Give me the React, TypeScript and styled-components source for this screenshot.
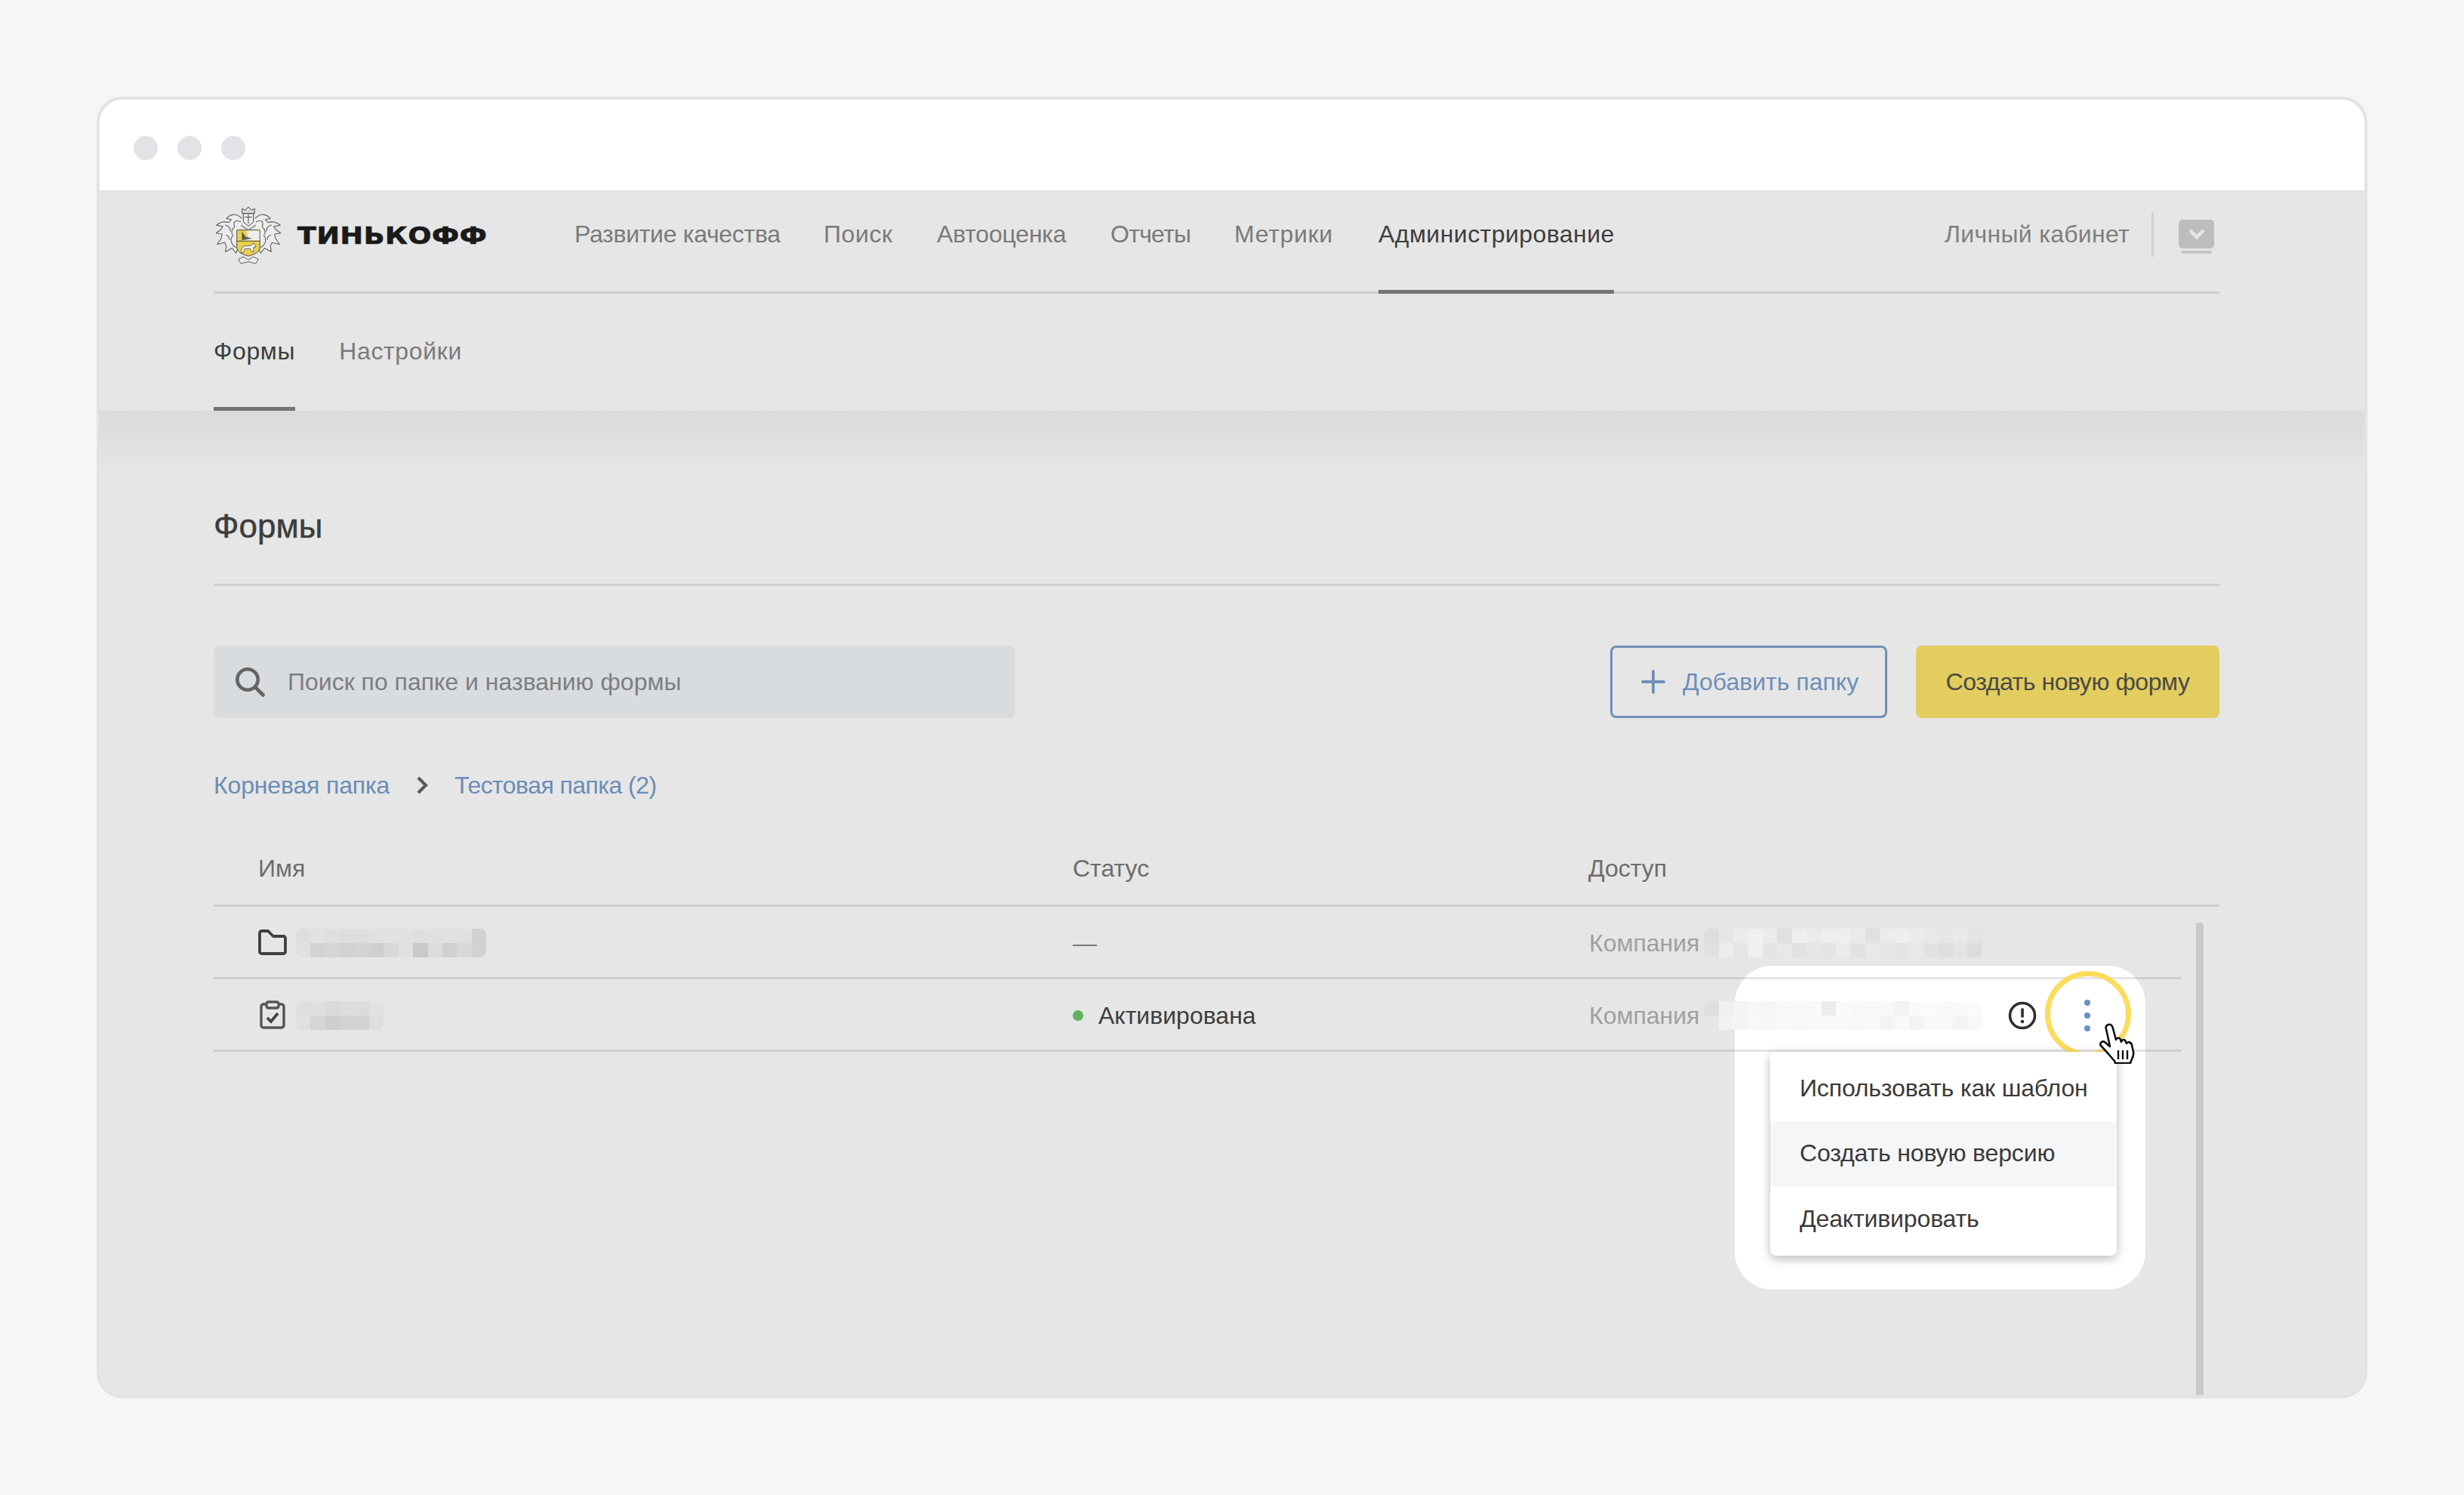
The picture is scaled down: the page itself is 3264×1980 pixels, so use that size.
import styled, { createGlobalStyle } from "styled-components";
import { Plus } from "lucide-react";

const GlobalStyle = createGlobalStyle`
  html, body {
    margin: 0;
    padding: 0;
    background: #f5f6f8;
    font-family: "Liberation Sans", Arial, sans-serif;
  }
  * {
    box-sizing: border-box;
  }
`;

const Page = styled.div`
  width: 3264px;
  height: 1980px;
  overflow: hidden;
  padding: 128px 0 0 128px;
  background: #f5f6f8;
`;

const Window = styled.div`
  width: 3008px;
  height: 1724px;
  display: flex;
  flex-direction: column;
  position: relative;
  overflow: hidden;
  border: 4px solid #e1e3e7;
  border-radius: 34px;
  background: #e6e6e6;
`;

const TitleBar = styled.div`
  height: 124px;
  flex: none;
  padding: 8px 0 0 45px;
  display: flex;
  align-items: center;
  gap: 26px;
  background: #fff;
  border-bottom: 4px solid #e1e3e7;
`;

const Dot = styled.span`
  width: 32px;
  height: 32px;
  border-radius: 50%;
  background: #e1e3e7;
`;

const Header = styled.header`
  height: 288px;
  flex: none;
  padding: 0 192px 0 151px;
`;

const TopNav = styled.nav`
  height: 133px;
  display: flex;
  align-items: stretch;
  border-bottom: 3px solid #cfcfcf;
`;

const Brand = styled.div`
  width: 478px;
  flex: none;
  padding: 17px 0 0 3px;
  display: flex;
  align-items: flex-start;
  gap: 22px;
`;

const BrandName = styled.span`
  margin-top: 20px;
  font-family: "DejaVu Sans", sans-serif;
  font-size: 32px;
  font-weight: 700;
  line-height: 38px;
  letter-spacing: 0.5px;
  color: #1a1a1a;
  -webkit-text-stroke: 0.7px #1a1a1a;
  transform: scaleX(1.14);
  transform-origin: left center;
`;

const NavList = styled.div`
  display: flex;
  gap: 58px;
`;

const NavLink = styled.a<{ $active?: boolean; $width: number; $spacing: number }>`
  width: ${(p) => p.$width}px;
  padding-top: 35px;
  font-size: 32px;
  line-height: 38px;
  letter-spacing: ${(p) => p.$spacing}px;
  white-space: nowrap;
  color: ${(p) => (p.$active ? "#3d3d3d" : "#7a7a7a")};
  border-bottom: 5px solid ${(p) => (p.$active ? "#737373" : "transparent")};
  margin-bottom: -3px;
`;

const Account = styled.div`
  margin-left: auto;
  padding: 35px 7px 0 0;
  display: flex;
  align-items: flex-start;
`;

const AccountLink = styled.span`
  font-size: 32px;
  line-height: 38px;
  letter-spacing: 0.3px;
  color: #7e7e7e;
`;

const AccountDivider = styled.span`
  width: 3px;
  height: 58px;
  margin: -9px 33px 0 29px;
  background: #cfcfcf;
`;

const AccountToggle = styled.span`
  width: 47px;
  height: 38px;
  display: flex;
  align-items: center;
  justify-content: center;
  position: relative;
  border-radius: 5px;
  background: #bcbdbf;

  &::after {
    content: "";
    position: absolute;
    left: 3px;
    right: 3px;
    bottom: -7px;
    height: 4px;
    border-radius: 0 0 3px 3px;
    background: #c4c5c7;
  }
`;

const SubNav = styled.div`
  height: 155px;
  display: flex;
  gap: 58px;
`;

const SubLink = styled.a<{ $active?: boolean }>`
  height: 155px;
  padding-top: 56px;
  font-size: 32px;
  line-height: 40px;
  letter-spacing: 0.65px;
  color: ${(p) => (p.$active ? "#3d3d3d" : "#7a7a7a")};
  border-bottom: 5px solid ${(p) => (p.$active ? "#737373" : "transparent")};
`;

const Content = styled.main`
  flex: 1;
  min-height: 0;
  padding: 0 192px 0 151px;
  display: flex;
  flex-direction: column;
  background: linear-gradient(#dadada 0, #e6e6e6 80px);
`;

const PageTitle = styled.h1`
  height: 232px;
  flex: none;
  margin: 0;
  padding-top: 128px;
  font-size: 44px;
  line-height: 50px;
  font-weight: 400;
  -webkit-text-stroke: 0.5px #3d3d3d;
  color: #3d3d3d;
  border-bottom: 3px solid #cfcfcf;
`;

const Toolbar = styled.div`
  height: 96px;
  flex: none;
  margin-top: 79px;
  display: flex;
  gap: 38px;
`;

const SearchBox = styled.div`
  width: 1062px;
  margin-right: auto;
  padding-left: 29px;
  display: flex;
  align-items: center;
  gap: 30px;
  border-radius: 8px;
  background: #d9dcdf;
  font-size: 32px;
  color: #7c7e82;
`;

const AddButton = styled.button`
  width: 367px;
  display: flex;
  align-items: center;
  gap: 15px;
  padding: 0 0 0 30px;
  border: 3px solid #6f8fb8;
  border-radius: 8px;
  background: transparent;
  font: inherit;
  font-size: 32px;
  color: #6f8fb8;
`;

const CreateButton = styled.button`
  width: 402px;
  padding: 0;
  border: none;
  border-radius: 8px;
  background: #e2cd5e;
  font: inherit;
  font-size: 32px;
  letter-spacing: -0.45px;
  color: #4a4a45;
`;

const Breadcrumbs = styled.div`
  height: 44px;
  flex: none;
  margin-top: 67px;
  display: flex;
  align-items: center;
  gap: 35px;
  font-size: 32px;
  color: #6a8db5;
`;

const Crumb = styled.span<{ $spacing: number }>`
  letter-spacing: ${(p) => p.$spacing}px;
`;

const TableHead = styled.div`
  height: 139px;
  flex: none;
  padding: 69px 0 0;
  display: grid;
  grid-template-columns: 1138px 683px 1fr;
  font-size: 32px;
  line-height: 38px;
  color: #6d6d6d;
  border-bottom: 3px solid #cfcfcf;
`;

const HeadCell = styled.div<{ $first?: boolean }>`
  padding-left: ${(p) => (p.$first ? "59px" : "0")};
`;

const TableBody = styled.div`
  flex: 1;
  min-height: 0;
  display: flex;
`;

const Rows = styled.div`
  width: 2607px;
  flex: none;
`;

const Scrollbar = styled.div`
  width: 10px;
  margin: 21px 0 0 19px;
  background: #c8c9cb;
  border-radius: 4px 4px 0 0;
`;

const Row = styled.div`
  height: 96px;
  padding-top: 3px;
  position: relative;
  z-index: 1;
  display: grid;
  grid-template-columns: 1138px 683px 1fr;
  align-items: center;
  font-size: 32px;
  border-bottom: 3px solid rgba(0, 0, 0, 0.1);
`;

const NameCell = styled.div`
  padding-left: 59px;
  display: flex;
  align-items: center;
  gap: 12px;
`;

const RowIcon = styled.svg`
  width: 38px;
  height: 38px;
  flex: none;
  margin-top: -3px;
`;

const StatusCell = styled.div`
  display: flex;
  align-items: center;
  color: #3d3d3d;
`;

const StatusDash = styled.span`
  color: #7a7a7a;
`;

const StatusDot = styled.span`
  width: 14px;
  height: 14px;
  margin-right: 20px;
  border-radius: 50%;
  background: #5fb25f;
`;

const AccessCell = styled.div`
  padding-left: 1px;
  display: flex;
  align-items: center;
  color: #a0a0a0;
`;

const AccessLabel = styled.span`
  margin-right: 6px;
`;

const Mosaic = styled.div<{ $cols: number }>`
  display: grid;
  grid-template-columns: repeat(${(p) => p.$cols}, 19.4px);
  grid-auto-rows: 19.4px;
  overflow: hidden;
  border-radius: 8px;
`;

const Cell = styled.span<{ $shade: string }>`
  background: #${(p) => p.$shade};
`;

const AlertIcon = styled.svg`
  width: 38px;
  height: 38px;
  margin-left: 34px;
`;

const MenuToggle = styled.div`
  width: 8px;
  height: 42px;
  margin-left: 63px;
  display: flex;
  flex-direction: column;
  justify-content: space-between;
`;

const ToggleDot = styled.span`
  width: 8px;
  height: 8px;
  border-radius: 50%;
  background: #6a8fc5;
`;

/* white spot + ring sit over the table, they are the annotation of the shot */
const Spotlight = styled.div`
  position: absolute;
  left: 2166px;
  top: 1147px;
  width: 544px;
  height: 429px;
  border-radius: 50px;
  background: #fff;
`;

const Ring = styled.div`
  position: absolute;
  left: 2577px;
  top: 1154px;
  width: 114px;
  height: 114px;
  z-index: 2;
  border: 7px solid #fbdc5c;
  border-radius: 50%;
`;

const Cursor = styled.svg`
  position: absolute;
  left: 2648px;
  top: 1223px;
  width: 48px;
  height: 54px;
  z-index: 4;
`;

const Menu = styled.div`
  position: absolute;
  left: 2213px;
  top: 1261px;
  width: 459px;
  padding: 5px 0;
  z-index: 3;
  overflow: hidden;
  border-radius: 8px;
  background: #fff;
  box-shadow: 0 4px 14px rgba(0, 0, 0, 0.28);
`;

const MenuItem = styled.div<{ $hover?: boolean }>`
  height: 86.5px;
  padding-left: 39px;
  display: flex;
  align-items: center;
  font-size: 32px;
  letter-spacing: -0.15px;
  color: #3a3a3a;
  background: ${(p) => (p.$hover ? "#f5f6f8" : "#fff")};
`;

const navItems = [
  { label: "Развитие качества", width: 272, spacing: -0.3 },
  { label: "Поиск", width: 92, spacing: 0.6 },
  { label: "Автооценка", width: 172, spacing: -0.2 },
  { label: "Отчеты", width: 106, spacing: -0.7 },
  { label: "Метрики", width: 133, spacing: 0.7 },
  { label: "Администрирование", width: 312, spacing: 0.45, active: true },
];

const folderCells = [
  "dedede", "e2e2e2", "dfdfdf", "dddddd", "dddddd", "e0e0e0", "e2e2e2", "e1e1e1", "dfdfdf", "e0e0e0", "e2e2e2", "e0e0e0", "d0d0d0",
  "e0e0e0", "d3d3d3", "d6d6d6", "d2d2d2", "d4d4d4", "cfcfcf", "d8d8d8", "e0e0e0", "c9c9c9", "dcdcdc", "d0d0d0", "d8d8d8", "d2d2d2",
];

const formCells = [
  "dedede", "dfdfdf", "dadada", "dddddd", "dcdcdc", "e2e2e2",
  "e0e0e0", "d5d5d5", "cecece", "d2d2d2", "d2d2d2", "dedede",
];

const accessCells = [
  "dedede", "e6e6e6", "ececec", "f0f0f0", "ebebeb", "e0e0e0", "eeeeee", "ebebeb", "eeeeee", "efefef", "eaeaea", "e0e0e0", "ececec", "efefef", "ececec", "e8e8e8", "e6e6e6", "eaeaea", "e4e4e4",
  "e0e0e0", "ececec", "e6e6e6", "f0f0f0", "e4e4e4", "e8e8e8", "e2e2e2", "e6e6e6", "e4e4e4", "ebebeb", "e2e2e2", "e8e8e8", "e6e6e6", "e4e4e4", "e8e8e8", "e2e2e2", "dedede", "e4e4e4", "dcdcdc",
];

const accessWhiteCells = [
  "dfdfdf", "f0f0f0", "f4f4f4", "f7f7f7", "f6f6f6", "f9f9f9", "f8f8f8", "f9f9f9", "ececec", "fafafa", "f8f8f8", "f9f9f9", "f8f8f8", "f3f3f3", "fafafa", "fbfbfb", "f9f9f9", "fafafa", "fbfbfb",
  "e6e6e6", "f2f2f2", "f4f4f4", "f8f8f8", "f7f7f7", "f9f9f9", "f8f8f8", "f9f9f9", "f9f9f9", "f9f9f9", "f8f8f8", "f9f9f9", "f4f4f4", "f9f9f9", "f3f3f3", "f9f9f9", "f9f9f9", "f4f4f4", "f8f8f8",
];

const PixelBlock = ({ cols, cells }: { cols: number; cells: string[] }) => (
  <Mosaic $cols={cols}>
    {cells.map((shade, i) => (
      <Cell key={i} $shade={shade} />
    ))}
  </Mosaic>
);

const mantle = (
  <g stroke="#5a5a5a" strokeWidth="3.2" strokeLinejoin="round" strokeLinecap="round" fill="none">
    <path
      d="M122 60C100 38 75 45 62 62L82 66L70 78C55 72 35 76 22 88L48 94L38 108L20 120L45 124L42 140L25 165L55 158L62 172L58 195L85 180L100 200L108 182"
      fill="#ececec"
    />
    <path d="M118 75C95 62 88 80 95 95C82 105 80 120 88 130C75 145 80 165 100 178" />
    <path d="M58 88C70 92 78 100 78 112M60 128C68 130 74 136 74 146" />
  </g>
);

const TinkoffCrest = () => (
  <svg width="86" height="78" viewBox="20 12 260 236" fill="none">
    {mantle}
    <g transform="translate(300 0) scale(-1 1)">{mantle}</g>
    <g stroke="#4a4a4a" strokeWidth="3" strokeLinejoin="round">
      <path d="M125 42V22L137 28L150 15L163 28L175 22V42Z" fill="#d8d8d8" />
      <path d="M130 42H170V75L150 92L130 75Z" fill="#efefef" />
      <path d="M135 56H165M150 44V82" />
      <path d="M120 88L150 108L180 88" />
      <path d="M104 108H196V180Q196 200 150 212Q104 200 104 180Z" fill="#e9d04f" />
    </g>
    <path d="M142 110H194V150H122L150 135Z" fill="#eeeeee" />
    <path d="M124 114L140 135L165 141L124 149Z" fill="#5c5c4c" />
    <path d="M104 152H196" stroke="#4a4a4a" strokeWidth="3" />
    <path
      d="M120 190L130 172L160 170L172 160L180 175L170 178L172 195L163 195L158 182L135 183L130 198L122 198Z"
      fill="#f4f4f4"
      stroke="#4a4a4a"
      strokeWidth="2.4"
    />
    <path
      d="M110 225L130 215L150 228L170 215L190 225L180 242L150 235L120 242Z"
      fill="#ececec"
      stroke="#5a5a5a"
      strokeWidth="3"
      strokeLinejoin="round"
    />
  </svg>
);

const App = () => {
  return (
    <Page>
      <GlobalStyle />
      <Window>
        <TitleBar>
          <Dot />
          <Dot />
          <Dot />
        </TitleBar>

        <Header>
          <TopNav>
            <Brand>
              <TinkoffCrest />
              <BrandName>ТИНЬКОФФ</BrandName>
            </Brand>
            <NavList>
              {navItems.map((item) => (
                <NavLink key={item.label} $width={item.width} $spacing={item.spacing} $active={item.active}>
                  {item.label}
                </NavLink>
              ))}
            </NavList>
            <Account>
              <AccountLink>Личный кабинет</AccountLink>
              <AccountDivider />
              <AccountToggle>
                <svg width="24" height="16" viewBox="0 0 24 16" fill="none">
                  <path d="M3 3l9 9 9-9" stroke="#e6e6e6" strokeWidth="4.5" />
                </svg>
              </AccountToggle>
            </Account>
          </TopNav>
          <SubNav>
            <SubLink $active>Формы</SubLink>
            <SubLink>Настройки</SubLink>
          </SubNav>
        </Header>

        <Content>
          <PageTitle>Формы</PageTitle>
          <Toolbar>
            <SearchBox>
              <svg width="39" height="39" viewBox="0 0 39 39" fill="none">
                <circle cx="16" cy="16" r="13.7" stroke="#646464" strokeWidth="4.6" />
                <path d="M26 26L36.5 36.5" stroke="#646464" strokeWidth="4.6" strokeLinecap="round" />
              </svg>
              Поиск по папке и названию формы
            </SearchBox>
            <AddButton>
              <Plus size={48} strokeWidth={1.9} />
              Добавить папку
            </AddButton>
            <CreateButton>Создать новую форму</CreateButton>
          </Toolbar>

          <Breadcrumbs>
            <Crumb $spacing={-0.15}>Корневая папка</Crumb>
            <svg width="16" height="24" viewBox="0 0 16 24" fill="none">
              <path d="M3 2l10 10L3 22" stroke="#5a5a5a" strokeWidth="4.2" />
            </svg>
            <Crumb $spacing={-0.55}>Тестовая папка (2)</Crumb>
          </Breadcrumbs>

          <TableHead>
            <HeadCell $first>Имя</HeadCell>
            <HeadCell>Статус</HeadCell>
            <HeadCell>Доступ</HeadCell>
          </TableHead>

          <TableBody>
            <Rows>
              <Row>
                <NameCell>
                  <RowIcon viewBox="0 0 38 38" fill="none">
                    <path
                      d="M2 6.5A2.5 2.5 0 0 1 4.5 4H13L20 11H33.5A2.5 2.5 0 0 1 36 13.5V31.5A2.5 2.5 0 0 1 33.5 34H4.5A2.5 2.5 0 0 1 2 31.5Z"
                      stroke="#3f3f3f"
                      strokeWidth="3.8"
                      strokeLinejoin="round"
                    />
                  </RowIcon>
                  <PixelBlock cols={13} cells={folderCells} />
                </NameCell>
                <StatusCell>
                  <StatusDash>—</StatusDash>
                </StatusCell>
                <AccessCell>
                  <AccessLabel>Компания</AccessLabel>
                  <PixelBlock cols={19} cells={accessCells} />
                </AccessCell>
              </Row>
              <Row>
                <NameCell>
                  <RowIcon viewBox="0 0 38 38" fill="none">
                    <rect x="4" y="5" width="30" height="31" rx="3" stroke="#555" strokeWidth="3.4" />
                    <rect x="11" y="2" width="16" height="8" rx="2.5" fill="#e6e6e6" stroke="#555" strokeWidth="3.4" />
                    <path d="M12 23l5 5 9-11" stroke="#444" strokeWidth="3.8" />
                  </RowIcon>
                  <PixelBlock cols={6} cells={formCells} />
                </NameCell>
                <StatusCell>
                  <StatusDot />
                  Активирована
                </StatusCell>
                <AccessCell>
                  <AccessLabel>Компания</AccessLabel>
                  <PixelBlock cols={19} cells={accessWhiteCells} />
                  <AlertIcon viewBox="0 0 38 38" fill="none">
                    <circle cx="19" cy="19" r="16.5" stroke="#2f2f2f" strokeWidth="3.6" />
                    <path d="M19 9.5v12" stroke="#2f2f2f" strokeWidth="3.6" />
                    <circle cx="19" cy="27" r="2.3" fill="#2f2f2f" />
                  </AlertIcon>
                  <MenuToggle>
                    <ToggleDot />
                    <ToggleDot />
                    <ToggleDot />
                  </MenuToggle>
                </AccessCell>
              </Row>
            </Rows>
            <Scrollbar />
          </TableBody>
        </Content>

        <Spotlight />
        <Ring />
        <Menu>
          <MenuItem>Использовать как шаблон</MenuItem>
          <MenuItem $hover>Создать новую версию</MenuItem>
          <MenuItem>Деактивировать</MenuItem>
        </Menu>
        <Cursor viewBox="0 0 48 54">
          <path
            d="M13 2C16 1 18 3 19 7L23 22C24 19 28 19 29 22L30 25C31 21 35 21 36 25L37 27C38 24 43 25 44 29L46 38C47 44 44 47 43 50L42 53L22 53L21 50C17 46 11 38 3 30C1 27 4 23 8 25L15 31L10 8C9 5 10 3 13 2Z"
            fill="#fff"
            stroke="#111"
            strokeWidth="2.6"
            strokeLinejoin="round"
          />
          <path d="M26 36V48M32 36V48M38 36V48" stroke="#111" strokeWidth="2.4" />
        </Cursor>
      </Window>
    </Page>
  );
};

export default App;
